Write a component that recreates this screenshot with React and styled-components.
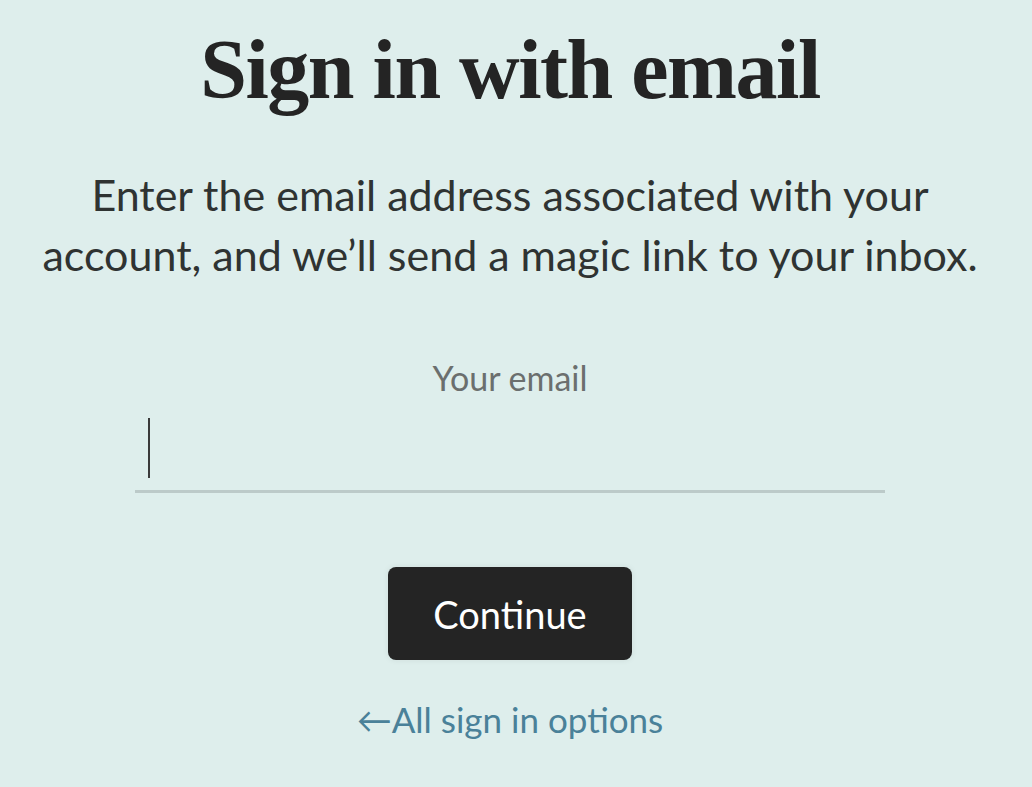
import React from "react";
import styled, { createGlobalStyle } from "styled-components";

const GlobalStyle = createGlobalStyle`
  html, body {
    margin: 0;
    padding: 0;
    background: #deeeec;
  }
  body {
    font-family: Lato, "Open Sans", sans-serif;
    color: #242424;
  }
`;

const Page = styled.main`
  width: 1020px;
  min-height: 787px;
  display: flex;
  flex-direction: column;
  align-items: center;
  box-sizing: border-box;
  padding-top: 20px;
`;

const Title = styled.h1`
  margin: 0;
  font-family: "Liberation Serif", "Times New Roman", serif;
  font-weight: 700;
  font-size: 84px;
  line-height: 100px;
  letter-spacing: -1.5px;
  color: #242424;
`;

const Lead = styled.p`
  margin: 45px 0 0;
  font-size: 43px;
  line-height: 60px;
  text-align: center;
  color: #2f3332;
`;

const Field = styled.div`
  margin-top: 73px;
  width: 750px;
  display: flex;
  flex-direction: column;
  align-items: center;
`;

const Label = styled.label`
  font-size: 34px;
  line-height: 40px;
  color: #6b6f6e;
`;

const InputRow = styled.div`
  align-self: stretch;
  margin-top: 20px;
  height: 72px;
  display: flex;
  align-items: flex-start;
  padding-left: 13px;
  border-bottom: 3px solid #bccac9;
`;

const Caret = styled.span`
  width: 2px;
  height: 60px;
  background: #3a3a3a;
`;

const Input = styled.input`
  flex: 1;
  height: 60px;
  border: none;
  outline: none;
  background: transparent;
  font: inherit;
  font-size: 36px;
`;

const Button = styled.button`
  margin-top: 74px;
  width: 244px;
  height: 93px;
  border: none;
  border-radius: 8px;
  background: #242424;
  color: #ffffff;
  font-family: inherit;
  font-size: 38px;
  box-shadow: 0 0 6px rgba(36, 36, 36, 0.08);
  cursor: pointer;
`;

const BackLink = styled.a`
  margin-top: 37px;
  font-size: 35px;
  line-height: 44px;
  color: #4a8199;
  text-decoration: none;
`;

export default function App() {
  return (
    <>
      <GlobalStyle />
      <Page>
        <Title>Sign in with email</Title>
        <Lead>
          Enter the email address associated with your
          <br />
          account, and we’ll send a magic link to your inbox.
        </Lead>
        <Field>
          <Label htmlFor="email">Your email</Label>
          <InputRow>
            <Caret />
            <Input id="email" type="email" />
          </InputRow>
        </Field>
        <Button>Continue</Button>
        <BackLink href="#">←All sign in options</BackLink>
      </Page>
    </>
  );
}
